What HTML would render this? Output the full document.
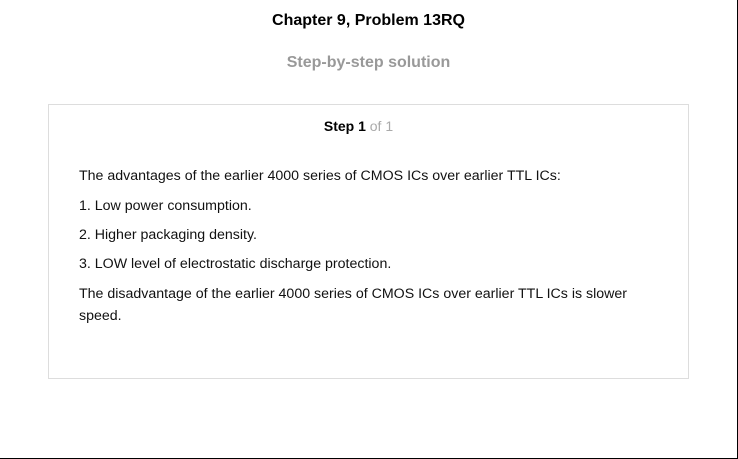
<!DOCTYPE html>
<html><head><style>
html,body{margin:0;padding:0;background:#fff}
body{width:737px;height:458px;border-right:1px solid #000;border-bottom:1px solid #000;position:relative;font-family:"Liberation Sans",Arial,sans-serif;overflow:hidden}
.t{position:absolute;left:0;width:737px;text-align:center;font-weight:bold}
.box{position:absolute;left:48px;top:104px;width:639px;height:273px;border:1px solid #ddd}
p{position:absolute;left:30px;margin:0;font-size:14.2px;color:#111;width:565px;line-height:22px}
</style></head><body>
<div class="t" style="top:12px;font-size:16px;color:#000">Chapter 9, Problem 13RQ</div>
<div class="t" style="top:54px;font-size:16px;color:#999">Step-by-step solution</div>
<div class="box">
<div style="position:absolute;top:13px;left:-10px;width:100%;text-align:center;font-size:14px"><b>Step 1</b> <span style="color:#aaa">of 1</span></div>
<p style="top:60px">The advantages of the earlier 4000 series of CMOS ICs over earlier TTL ICs:</p>
<p style="top:90px">1. Low power consumption.</p>
<p style="top:119px">2. Higher packaging density.</p>
<p style="top:148px">3. LOW level of electrostatic discharge protection.</p>
<p style="top:178px">The disadvantage of the earlier 4000 series of CMOS ICs over earlier TTL ICs is slower speed.</p>
</div>
</body></html>
